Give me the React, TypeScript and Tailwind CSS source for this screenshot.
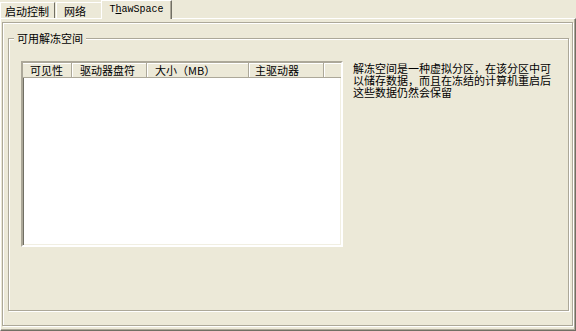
export default function App() {
  return (
    <div className="w-[576px] h-[331px] bg-[#ECE9D8] text-black text-[11px] leading-[12px] font-['Noto_Sans_CJK_SC','Noto_Sans',sans-serif] flex flex-col overflow-hidden">

      {/* tab strip */}
      <div className="h-[18px] flex items-end shrink-0">
        <div className="w-[55px] h-[16px] border-l border-t border-white border-r border-r-[#716F64] pl-[4px] flex items-center">
          启动控制
        </div>
        <div className="ml-px w-[45px] h-[16px] border-l border-t border-white pl-[7px] flex items-center">
          网络
        </div>
        <div className="relative z-10 -mb-px w-[71px] h-[19px] bg-[#ECE9D8] border-l border-t border-white border-r border-r-[#716F64] shadow-[inset_-1px_0_0_#ACA899] flex items-center justify-center font-['Liberation_Mono',monospace] text-[10px]">
          T<span className="underline">h</span>awSpace
        </div>
      </div>

      {/* tab panel */}
      <div className="flex-1 flex flex-col border-t border-l border-white border-r border-b border-r-[#716F64] border-b-[#716F64] shadow-[inset_-1px_-1px_0_#ACA899] pt-[3px] pl-px pr-[2px] pb-[4px]">
        <div className="flex-1 flex flex-col border border-[#ACA899] shadow-[inset_1px_1px_0_#fff,1px_1px_0_#fff] pt-[15px] pl-[5px] pr-[3px] pb-[14px]">

          {/* group box */}
          <div className="relative flex-1 border border-[#ACA899] shadow-[inset_1px_1px_0_#fff,1px_1px_0_#fff] pt-[22px] pl-[12px]">
            <span className="absolute left-[5px] -top-[7px] px-[3px] bg-[#ECE9D8]">
              可用解冻空间
            </span>

            <div className="flex items-start">

              {/* list view */}
              <div className="w-[322px] h-[186px] bg-white border-2 border-t-[#ACA899] border-l-[#ACA899] border-r-white border-b-white shadow-[inset_1px_1px_0_#716F64,inset_-1px_-1px_0_#F1EFE2] flex flex-col">
                <div className="h-[15px] flex bg-[#ECE9D8] border-b border-[#ACA899] shadow-[inset_0_1px_0_#fff]">
                  <div className="w-[49px] border-r border-[#ACA899] pl-[7px] flex items-center">
                    可见性
                  </div>
                  <div className="w-[75px] border-l border-white border-r border-r-[#ACA899] pl-[7px] flex items-center">
                    驱动器盘符
                  </div>
                  <div className="w-[102px] border-l border-white border-r border-r-[#ACA899] pl-[7px] flex items-center">
                    大小（MB）
                  </div>
                  <div className="w-[75px] border-l border-white border-r border-r-[#ACA899] pl-[5px] flex items-center">
                    主驱动器
                  </div>
                  <div className="flex-1 border-l border-white" />
                </div>
                <div className="flex-1 ml-px" />
              </div>

              <p className="ml-[10px] pt-px">
                解冻空间是一种虚拟分区，在该分区中可
                <br />
                以储存数据，而且在冻结的计算机重启后
                <br />
                这些数据仍然会保留
              </p>

            </div>
          </div>

        </div>
      </div>

    </div>
  );
}
